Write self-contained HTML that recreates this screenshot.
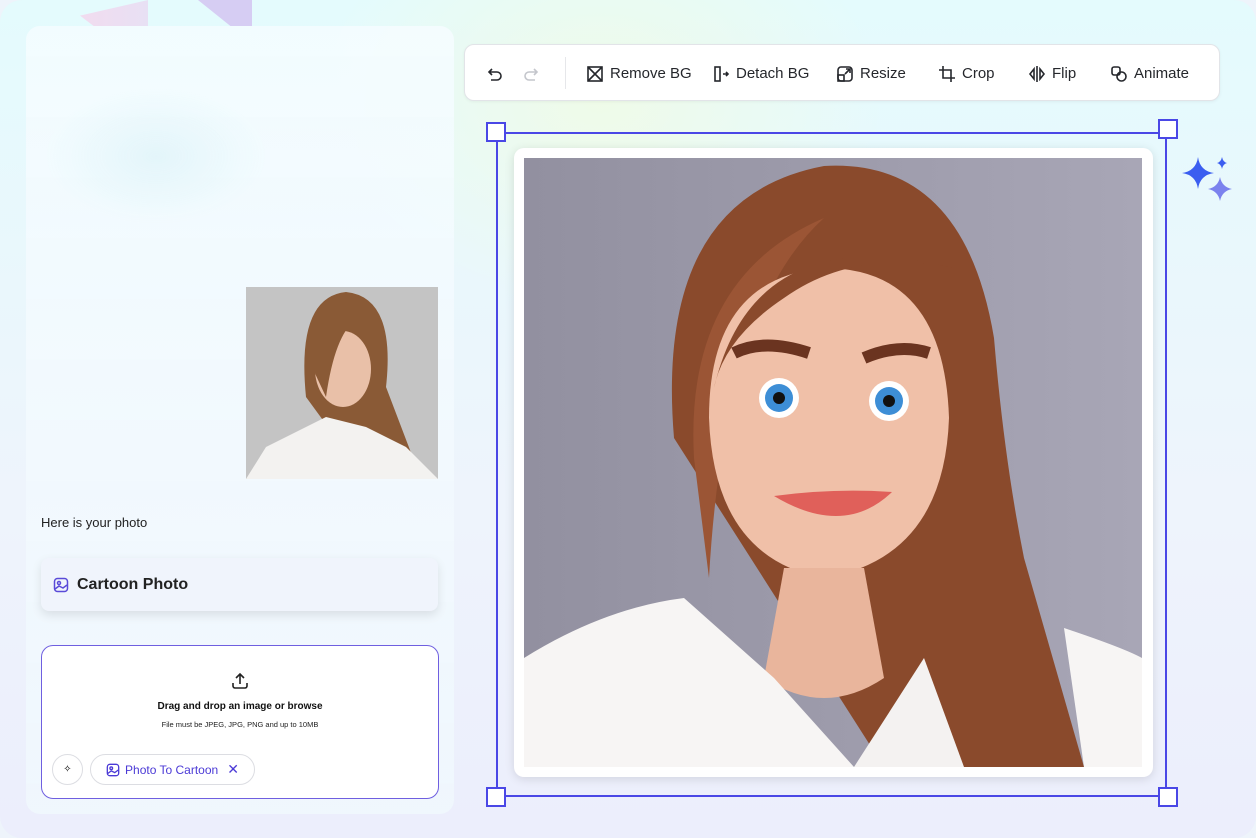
<!DOCTYPE html>
<html><head><meta charset="utf-8"><style>
*{margin:0;padding:0;box-sizing:border-box}
body{width:1256px;height:838px;overflow:hidden;font-family:"Liberation Sans",sans-serif;background:#eef4fb}
.bg{position:absolute;inset:0;border-radius:22px;background:radial-gradient(ellipse 400px 300px at 600px 100px,#effbe8 0%,transparent 70%),linear-gradient(180deg,#e4fbfd 0%,#eef4fc 60%,#eceefc 100%)}
.tri1{position:absolute;left:80px;top:0;width:68px;height:26px;background:linear-gradient(90deg,#f1dcef,#e8e0f4);clip-path:polygon(0 60%,100% 0,100% 100%,20% 100%)}
.tri2{position:absolute;left:198px;top:0;width:54px;height:26px;background:#d6cdf3;clip-path:polygon(0 0,100% 0,100% 100%,60% 100%)}
.panel{position:absolute;left:26px;top:26px;width:428px;height:788px;border-radius:14px;background:radial-gradient(ellipse 130px 80px at 130px 130px,#e3f5fa,transparent 85%),linear-gradient(180deg,rgba(245,252,255,.85),rgba(240,247,253,.9))}
.tb{position:absolute;left:464px;top:44px;width:756px;height:57px;background:#fff;border:1px solid #e2e4e8;border-radius:10px;box-shadow:0 1px 3px rgba(0,0,0,.05)}
.tb .it{position:absolute;top:0;height:57px;display:flex;align-items:center;gap:6px;font-size:15px;color:#25272c}
.tb svg{width:18px;height:18px;fill:none;stroke:#25272c;stroke-width:1.6}
.sep{position:absolute;left:100px;top:12px;width:1px;height:32px;background:#e6e7ea}
.frame{position:absolute;left:496px;top:132px;width:671px;height:665px;border:2px solid #4a47e6}
.h{position:absolute;width:20px;height:20px;background:#fff;border:2px solid #4a47e6}
.card{position:absolute;left:514px;top:148px;width:639px;height:629px;background:#fff;border-radius:10px;box-shadow:0 2px 10px rgba(0,0,0,.12)}
.txt{position:absolute;left:41px;top:515px;font-size:13px;color:#222}
.cp{position:absolute;left:41px;top:558px;width:397px;height:53px;border-radius:8px;background:#f0f4fc;box-shadow:0 4px 10px rgba(0,0,0,.1);display:flex;align-items:center;padding-left:12px;gap:8px;font-weight:bold;font-size:16px;color:#222}
.up{position:absolute;left:41px;top:645px;width:398px;height:154px;border:1.5px solid #6f5fe0;border-radius:12px;background:#fff}
.chip{position:absolute;top:108px;height:31px;border:1px solid #dcdde2;border-radius:16px;display:flex;align-items:center;justify-content:center}
</style></head><body>
<div class="bg"></div><div class="tri1"></div><div class="tri2"></div>
<div class="panel"></div>

<svg style="position:absolute;left:246px;top:287px" width="192" height="192" viewBox="0 0 192 192">
<rect width="192" height="192" fill="#c4c4c4"/>
<path d="M60 110 Q50 10 100 5 Q150 10 140 100 L175 192 L120 192Z" fill="#8a5a36"/>
<ellipse cx="97" cy="82" rx="28" ry="38" fill="#e9c0a8"/>
<path d="M0 192 L20 160 Q60 140 80 130 L120 140 L160 160 L192 192Z" fill="#f3f2f0"/>
<path d="M66 80 Q80 15 115 30 Q90 40 80 110Z" fill="#8a5a36"/>
</svg>

<div class="txt">Here is your photo</div>
<div class="cp"><svg width="16" height="16" viewBox="0 0 16 16" fill="none" stroke="#5a4ad8" stroke-width="1.5"><rect x="1.5" y="1.5" width="13" height="13" rx="3"/><circle cx="6" cy="6" r="1.5"/><path d="M2 12 L6 9 L10 11 L14 8"/></svg>Cartoon Photo</div>
<div class="up">
<svg style="position:absolute;left:189px;top:26px" width="18" height="18" viewBox="0 0 18 18" fill="none" stroke="#222" stroke-width="1.6"><path d="M9 12V2M5 6l4-4 4 4M2 11v3a2 2 0 002 2h10a2 2 0 002-2v-3"/></svg>
<div style="position:absolute;top:55px;width:100%;text-align:center;font-size:10px;font-weight:bold;color:#111">Drag and drop an image or browse</div>
<div style="position:absolute;top:74px;width:100%;text-align:center;font-size:7.5px;color:#222">File must be JPEG, JPG, PNG and up to 10MB</div>
<div class="chip" style="left:10px;width:31px;font-size:10px">✧</div>
<div class="chip" style="left:48px;width:165px;gap:5px;font-size:12px;color:#4b3ad6"><svg width="14" height="14" viewBox="0 0 16 16" fill="none" stroke="#4b3ad6" stroke-width="1.5"><rect x="1.5" y="1.5" width="13" height="13" rx="3"/><circle cx="6" cy="6" r="1.5"/><path d="M2 12 L6 9 L10 11 L14 8"/></svg>Photo To Cartoon <span style="font-size:14px;margin-left:4px">✕</span></div>
</div>

<div class="tb">
<div class="it" style="left:20px"><svg viewBox="0 0 18 18"><path d="M4 7h8a4 4 0 010 8H6M7 4L4 7l3 3"/></svg></div>
<div class="it" style="left:58px"><svg viewBox="0 0 18 18" style="stroke:#c4c6cc"><path d="M14 7H6a4 4 0 000 8h6M11 4l3 3-3 3"/></svg></div>
<div class="sep"></div>
<div class="it" style="left:121px"><svg viewBox="0 0 18 18"><rect x="2" y="2" width="14" height="14"/><path d="M2 2l14 14M16 2L2 16"/></svg>Remove BG</div>
<div class="it" style="left:247px"><svg viewBox="0 0 18 18"><rect x="3" y="2" width="5" height="14"/><path d="M11 9h5M14 7l2 2-2 2"/></svg>Detach BG</div>
<div class="it" style="left:371px"><svg viewBox="0 0 18 18"><rect x="2" y="2" width="14" height="14" rx="3"/><rect x="2" y="10" width="6" height="6"/><path d="M9 9l5-5M10 4h4v4"/></svg>Resize</div>
<div class="it" style="left:473px"><svg viewBox="0 0 18 18"><path d="M5 1v12h12M1 5h12v12"/></svg>Crop</div>
<div class="it" style="left:563px"><svg viewBox="0 0 18 18"><path d="M9 1v16M6 4L2 9l4 5zM12 4l4 5-4 5z"/></svg>Flip</div>
<div class="it" style="left:645px"><svg viewBox="0 0 18 18"><rect x="2" y="2" width="8" height="8" rx="2"/><circle cx="11.5" cy="11.5" r="4.5"/></svg>Animate</div>
</div>

<div class="frame"></div>
<div class="h" style="left:486px;top:122px"></div><div class="h" style="left:1158px;top:119px"></div>
<div class="h" style="left:486px;top:787px"></div><div class="h" style="left:1158px;top:787px"></div>
<div class="card"></div>
<svg style="position:absolute;left:524px;top:158px" width="618" height="609" viewBox="0 0 618 609">
<defs><linearGradient id="g" x1="0" x2="1"><stop offset="0" stop-color="#9290a0"/><stop offset="1" stop-color="#a8a6b6"/></linearGradient></defs>
<rect width="618" height="609" fill="url(#g)"/>
<path d="M150 280 Q130 40 300 8 Q440 0 470 180 Q480 300 500 400 L560 609 L360 609 Z" fill="#8a4a2c"/>
<path d="M170 300 Q160 120 300 60 Q200 150 185 420 Z" fill="#9b5535"/>
<path d="M185 260 Q185 120 300 110 Q420 110 425 260 Q420 400 300 420 Q190 400 185 260Z" fill="#f0c0a8"/>
<path d="M190 230 Q230 60 430 110 Q330 90 260 140 Q200 180 190 230Z" fill="#8a4a2c"/>
<path d="M260 410 L240 520 Q300 560 360 520 L340 410Z" fill="#e9b59c"/>
<path d="M0 609 L0 500 Q80 450 160 440 L250 520 L330 609Z" fill="#f7f5f4"/>
<path d="M330 609 L400 500 L440 609Z" fill="#f4f2f1"/>
<path d="M540 470 Q600 490 618 500 L618 609 L560 609Z" fill="#f7f5f4"/>
<path d="M210 195 Q240 180 285 195" stroke="#6b3420" stroke-width="12" fill="none"/>
<path d="M340 200 Q375 185 405 195" stroke="#6b3420" stroke-width="12" fill="none"/>
<circle cx="255" cy="240" r="20" fill="#fff"/><circle cx="255" cy="240" r="14" fill="#3d8ed6"/><circle cx="255" cy="240" r="6" fill="#111"/>
<circle cx="365" cy="243" r="20" fill="#fff"/><circle cx="365" cy="243" r="14" fill="#3d8ed6"/><circle cx="365" cy="243" r="6" fill="#111"/>
<path d="M250 338 Q310 330 368 334 Q320 380 250 338Z" fill="#e0605a"/>
</svg>
<svg style="position:absolute;left:1180px;top:155px" width="56" height="50" viewBox="0 0 56 50">
<path d="M18 2 Q20 16 34 18 Q20 20 18 34 Q16 20 2 18 Q16 16 18 2Z" fill="#3b5ef0"/>
<path d="M42 2 Q43 7 47 8 Q43 9 42 14 Q41 9 37 8 Q41 7 42 2Z" fill="#3b5ef0"/>
<path d="M40 22 Q42 32 52 34 Q42 36 40 46 Q38 36 28 34 Q38 32 40 22Z" fill="#7b82ee"/>
</svg>
</body></html>
